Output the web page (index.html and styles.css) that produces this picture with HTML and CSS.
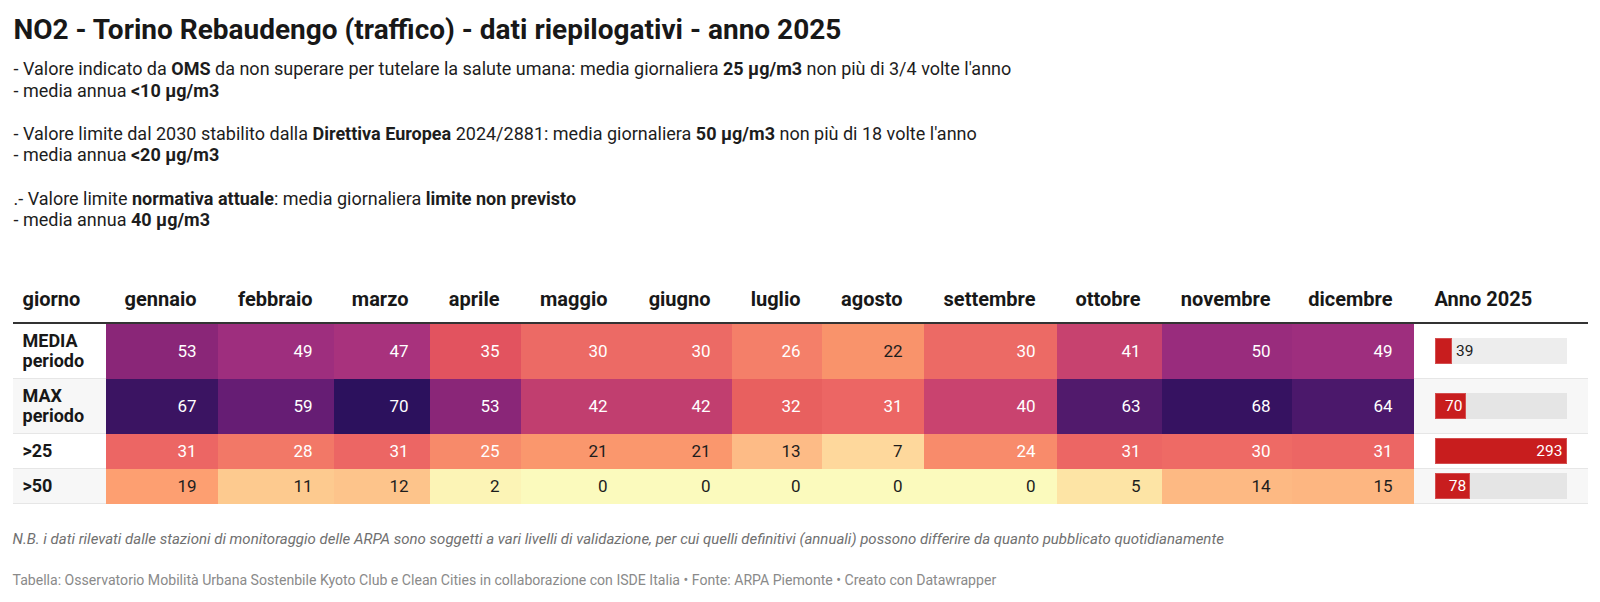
FILE: index.html
```html
<!DOCTYPE html>
<html lang="it">
<head>
<meta charset="utf-8">
<title>NO2 - Torino Rebaudengo</title>
<link rel="stylesheet" href="styles.css">
</head>
<body>
<div class="chart">
  <h1 class="title">NO2 - Torino Rebaudengo (traffico) - dati riepilogativi - anno 2025</h1>
  <p class="intro">- Valore indicato da <b>OMS</b> da non superare per tutelare la salute umana: media giornaliera <b>25 µg/m3</b> non più di 3/4 volte l'anno<br>- media annua <b>&lt;10 µg/m3</b><br><br>- Valore limite dal 2030 stabilito dalla <b>Direttiva Europea</b> 2024/2881: media giornaliera <b>50 µg/m3</b> non più di 18 volte l'anno<br>- media annua <b>&lt;20 µg/m3</b><br><br>.- Valore limite <b>normativa attuale</b>: media giornaliera <b>limite non previsto</b><br>- media annua <b>40 µg/m3</b></p>

  <table class="data">
    <colgroup>
      <col class="c-label"><col class="c-gen"><col class="c-feb"><col class="c-mar"><col class="c-apr"><col class="c-mag"><col class="c-giu"><col class="c-lug"><col class="c-ago"><col class="c-set"><col class="c-ott"><col class="c-nov"><col class="c-dic"><col class="c-anno">
    </colgroup>
    <thead>
      <tr>
        <th class="h-label">giorno</th>
        <th>gennaio</th><th>febbraio</th><th>marzo</th><th>aprile</th><th>maggio</th><th>giugno</th><th>luglio</th><th>agosto</th><th>settembre</th><th>ottobre</th><th>novembre</th><th>dicembre</th>
        <th class="h-anno">Anno 2025</th>
      </tr>
    </thead>
    <tbody>
      <tr class="two">
        <td class="label">MEDIA<br>periodo</td>
        <td class="h v53 w">53</td><td class="h v49 w">49</td><td class="h v47 w">47</td><td class="h v35 w">35</td><td class="h v30 w">30</td><td class="h v30 w">30</td><td class="h v26 w">26</td><td class="h v22 d">22</td><td class="h v30 w">30</td><td class="h v41 w">41</td><td class="h v50 w">50</td><td class="h v49 w">49</td>
        <td class="bar"><div class="track"><div class="fill" style="width:13.3%"></div><span class="out">39</span></div></td>
      </tr>
      <tr class="two alt">
        <td class="label">MAX<br>periodo</td>
        <td class="h v67 w">67</td><td class="h v59 w">59</td><td class="h v70 w">70</td><td class="h v53 w">53</td><td class="h v42 w">42</td><td class="h v42 w">42</td><td class="h v32 w">32</td><td class="h v31b w">31</td><td class="h v40 w">40</td><td class="h v63 w">63</td><td class="h v68 w">68</td><td class="h v64 w">64</td>
        <td class="bar"><div class="track"><div class="fill" style="width:24.2%"><span class="in">70</span></div></div></td>
      </tr>
      <tr>
        <td class="label">&gt;25</td>
        <td class="h v31 w">31</td><td class="h v28 w">28</td><td class="h v31 w">31</td><td class="h v25 w">25</td><td class="h v21 d">21</td><td class="h v21 d">21</td><td class="h v13 d">13</td><td class="h v7 d">7</td><td class="h v24 w">24</td><td class="h v31 w">31</td><td class="h v30c w">30</td><td class="h v31 w">31</td>
        <td class="bar"><div class="track"><div class="fill" style="width:100%"><span class="in">293</span></div></div></td>
      </tr>
      <tr class="alt">
        <td class="label">&gt;50</td>
        <td class="h v19 d">19</td><td class="h v11 d">11</td><td class="h v12 d">12</td><td class="h v2 d">2</td><td class="h v0 d">0</td><td class="h v0 d">0</td><td class="h v0 d">0</td><td class="h v0 d">0</td><td class="h v0 d">0</td><td class="h v5 d">5</td><td class="h v14 d">14</td><td class="h v15 d">15</td>
        <td class="bar"><div class="track"><div class="fill" style="width:27%"><span class="in">78</span></div></div></td>
      </tr>
    </tbody>
  </table>

  <p class="note">N.B. i dati rilevati dalle stazioni di monitoraggio delle ARPA sono soggetti a vari livelli di validazione, per cui quelli definitivi (annuali) possono differire da quanto pubblicato quotidianamente</p>
  <p class="credit">Tabella: Osservatorio Mobilità Urbana Sostenbile Kyoto Club e Clean Cities in collaborazione con ISDE Italia • Fonte: ARPA Piemonte • Creato con Datawrapper</p>
</div>
</body>
</html>
```

FILE: styles.css
```css
* { box-sizing: border-box; }
html, body { margin: 0; padding: 0; background: #ffffff; }
body {
  font-family: Roboto, "Liberation Sans", Arial, sans-serif;
  color: #1d1d1d;
}
.chart {
  padding: 12.5px 12.5px 0 12.5px;
}
.title {
  margin: 0 0 0 1px;
  font-size: 28px;
  line-height: 33px;
  font-weight: 700;
  color: #181818;
}
.intro {
  margin: 12.5px 0 0 1px;
  font-size: 18px;
  line-height: 21.6px;
  color: #1d1d1d;
}
.intro b { font-weight: 700; }

.data {
  margin-top: 48.5px;
  width: 1575px;
  table-layout: fixed;
  border-collapse: separate;
  border-spacing: 0;
  font-size: 17px;
  line-height: 20.5px;
}
.c-label { width: 93px; }
.c-gen { width: 112px; }
.c-feb { width: 116px; }
.c-mar { width: 96px; }
.c-apr { width: 91px; }
.c-mag { width: 108px; }
.c-giu { width: 103px; }
.c-lug { width: 90px; }
.c-ago { width: 102px; }
.c-set { width: 133px; }
.c-ott { width: 105px; }
.c-nov { width: 130px; }
.c-dic { width: 122px; }
.c-anno { width: 174px; }

.data th {
  font-size: 20px;
  line-height: 24px;
  font-weight: 700;
  color: #181818;
  text-align: right;
  padding: 8px 21px 11px 10px;
  border-bottom: 2px solid #333333;
  vertical-align: bottom;
  white-space: nowrap;
}
.data th.h-label { text-align: left; }
.data th.h-anno { text-align: left; padding-left: 21px; }

.data td {
  padding: 6.5px 21px 6.5px 10px;
  border-bottom: 1px solid #e6e6e6;
  vertical-align: middle;
  text-align: right;
}
.data td.label {
  text-align: left;
  font-size: 18px;
  font-weight: 700;
  color: #181818;
}
.data tr.alt td.label,
.data tr.alt td.bar { background: #f7f7f7; }

.data td.h { border-bottom-color: transparent; }
.w { color: #ffffff; }
.d { color: #1d1d1d; }

.v70 { background: #2c115d; }
.v68 { background: #361261; }
.v67 { background: #3b1462; }
.v64 { background: #4b186b; }
.v63 { background: #511a6c; }
.v59 { background: #661d74; }
.v53 { background: #8a2678; }
.v50 { background: #992c7d; }
.v49 { background: #9e2e7e; }
.v47 { background: #a8327d; }
.v42 { background: #c13e6f; }
.v41 { background: #c7426f; }
.v40 { background: #c9436f; }
.v35 { background: #e2535f; }
.v32 { background: #e8605f; }
.v31b { background: #ec6664; }
.v31 { background: #ec6664; }
.v30 { background: #ec6a65; }
.v30c { background: #ee6a65; }
.v28 { background: #f27867; }
.v26 { background: #f47f69; }
.v25 { background: #f78a6a; }
.v24 { background: #f88b6b; }
.v22 { background: #f9936b; }
.v21 { background: #fa976d; }
.v19 { background: #fd9f71; }
.v15 { background: #fdb681; }
.v14 { background: #fdb983; }
.v13 { background: #fdbb86; }
.v12 { background: #fdc48b; }
.v11 { background: #fdca8f; }
.v7 { background: #fed89c; }
.v5 { background: #fde4a5; }
.v2 { background: #fcf4b6; }
.v0 { background: #fbfabd; }

.data td.bar {
  text-align: left;
  padding: 4px 20px 4px 21px;
}
.track {
  display: flex;
  align-items: center;
  width: 132px;
  height: 26px;
  background: rgba(0, 0, 0, 0.07);
}
.fill {
  height: 26px;
  background: #c81d1e;
  box-shadow: inset 0 0 0 1px rgba(255, 255, 255, 0.22);
  display: flex;
  align-items: center;
  justify-content: flex-end;
  padding-right: 4px;
}
.in, .out {
  font-size: 15.5px;
  line-height: 26px;
}
.in { color: #ffffff; }
.out { color: #1d1d1d; margin-left: 4px; }

.note {
  margin: 24.5px 0 0 0;
  font-size: 15px;
  line-height: 20px;
  font-style: italic;
  color: #707070;
}
.credit {
  margin: 22px 0 0 0;
  font-size: 14.1px;
  line-height: 18px;
  color: #8a8a8a;
}
```
